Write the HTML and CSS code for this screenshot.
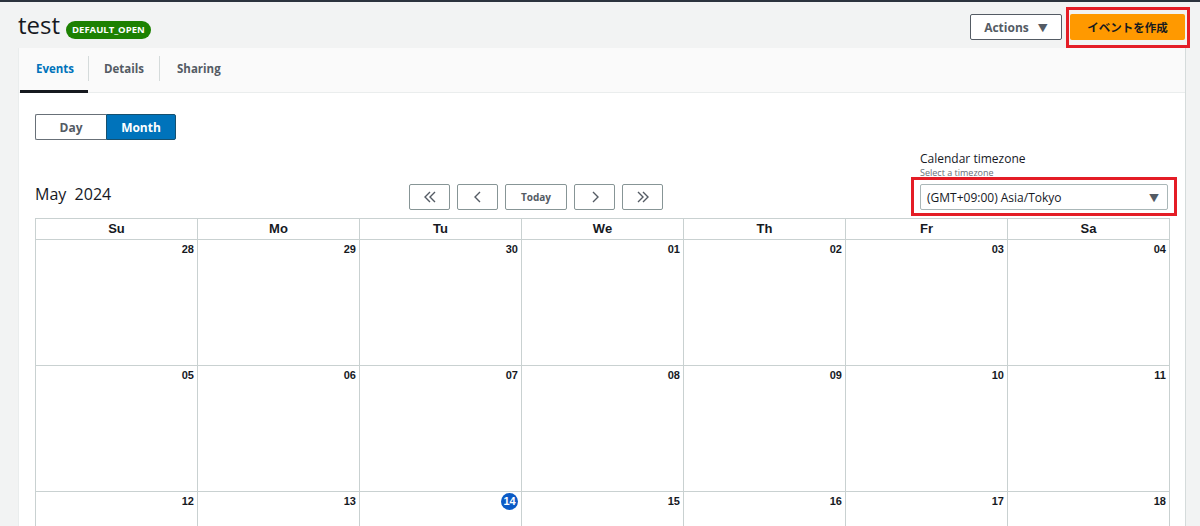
FILE: index.html
```html
<!DOCTYPE html>
<html lang="ja">
<head>
<meta charset="utf-8">
<link rel="stylesheet" href="styles.css">
</head>
<body>
<div class="topline"></div>
<header class="header">
  <div class="title-wrap">
    <h1 class="title">test</h1>
    <span class="badge">DEFAULT_OPEN</span>
  </div>
  <div class="actions">
    <button class="btn-actions">Actions <span class="caret">&#9660;</span></button>
    <div class="highlight hl-primary"><button class="btn-primary">イベントを作成</button></div>
  </div>
</header>
<main class="panel">
  <nav class="tabs">
    <div class="tab active">Events</div>
    <div class="sep"></div>
    <div class="tab">Details</div>
    <div class="sep"></div>
    <div class="tab">Sharing</div>
  </nav>
  <section class="content">
    <div class="seg">
      <button class="seg-btn">Day</button>
      <button class="seg-btn on">Month</button>
    </div>
    <div class="toolbar">
      <div class="month">May&nbsp; 2024</div>
      <div class="nav">
        <button class="nbtn"><svg width="14" height="12" viewBox="0 0 14 12"><path d="M7 1 2 6l5 5M12 1 7 6l5 5" fill="none" stroke="#545b64" stroke-width="1.4"/></svg></button>
        <button class="nbtn"><svg width="10" height="12" viewBox="0 0 10 12"><path d="M7 1 2 6l5 5" fill="none" stroke="#545b64" stroke-width="1.4"/></svg></button>
        <button class="nbtn today">Today</button>
        <button class="nbtn"><svg width="10" height="12" viewBox="0 0 10 12"><path d="M3 1l5 5-5 5" fill="none" stroke="#545b64" stroke-width="1.4"/></svg></button>
        <button class="nbtn"><svg width="14" height="12" viewBox="0 0 14 12"><path d="M2 1l5 5-5 5M7 1l5 5-5 5" fill="none" stroke="#545b64" stroke-width="1.4"/></svg></button>
      </div>
      <div class="tz">
        <div class="tz-label">Calendar timezone</div>
        <div class="tz-desc">Select a timezone</div>
        <div class="highlight hl-tz">
          <div class="tz-select"><span>(GMT+09:00) Asia/Tokyo</span><span class="caret">&#9660;</span></div>
        </div>
      </div>
    </div>
    <div class="cal">
      <div class="dow">Su</div><div class="dow">Mo</div><div class="dow">Tu</div><div class="dow">We</div><div class="dow">Th</div><div class="dow">Fr</div><div class="dow">Sa</div>
      <div class="day"><span class="num">28</span></div>
      <div class="day"><span class="num">29</span></div>
      <div class="day"><span class="num">30</span></div>
      <div class="day"><span class="num">01</span></div>
      <div class="day"><span class="num">02</span></div>
      <div class="day"><span class="num">03</span></div>
      <div class="day"><span class="num">04</span></div>
      <div class="day"><span class="num">05</span></div>
      <div class="day"><span class="num">06</span></div>
      <div class="day"><span class="num">07</span></div>
      <div class="day"><span class="num">08</span></div>
      <div class="day"><span class="num">09</span></div>
      <div class="day"><span class="num">10</span></div>
      <div class="day"><span class="num">11</span></div>
      <div class="day"><span class="num">12</span></div>
      <div class="day"><span class="num">13</span></div>
      <div class="day"><span class="num current">14</span></div>
      <div class="day"><span class="num">15</span></div>
      <div class="day"><span class="num">16</span></div>
      <div class="day"><span class="num">17</span></div>
      <div class="day"><span class="num">18</span></div>
    </div>
  </section>
</main>
</body>
</html>
```

FILE: styles.css
```css
html, body { margin: 0; padding: 0; }
body {
  background: #f2f3f3;
  font-family: "Open Sans", "Noto Sans", "Noto Sans CJK JP", sans-serif;
  color: #16191f;
  height: 526px;
  overflow: hidden;
}
button { font-family: inherit; cursor: pointer; }
.topline { height: 2px; background: #2b333d; }
.header {
  height: 46px;
  box-sizing: border-box;
  display: flex;
  align-items: flex-start;
  justify-content: space-between;
  padding: 5px 10px 0 18px;
}
.title-wrap { display: flex; align-items: flex-start; gap: 6px; margin-top: 3px; }
.title { margin: 0; font-size: 24px; font-weight: 400; line-height: 30px; color: #16191f; }
.badge {
  background: #1d8102;
  color: #fff;
  font-size: 9.5px;
  font-weight: 700;
  line-height: 18px;
  height: 18px;
  padding: 0 6px;
  border-radius: 9px;
  margin-top: 11px;
}
.actions { display: flex; align-items: flex-start; gap: 4px; }
.btn-actions {
  height: 26px;
  width: 92px;
  margin-top: 7px;
  background: #fff;
  border: 1px solid #545b64;
  border-radius: 2px;
  color: #545b64;
  font-size: 12px;
  font-weight: 700;
  padding: 0;
}
.btn-actions .caret { font-size: 10px; margin-left: 6px; }
.highlight { border: 3px solid #e41d26; }
.hl-primary { padding: 4px 2px 5px 1px; }
.btn-primary {
  display: block;
  height: 26px;
  width: 115px;
  background: #ff9900;
  border: none;
  border-radius: 2px;
  color: #16191f;
  font-family: "Noto Sans CJK JP", sans-serif;
  font-size: 11.5px;
  font-weight: 700;
  padding: 0;
}
.panel {
  margin-left: 18px;
  width: 1166px;
  background: #fff;
  border-right: 1px solid #d5dbdb;
  border-left: 1px solid #eaeded;
  min-height: 480px;
}
.tabs {
  height: 45px;
  display: flex;
  align-items: center;
  background: #fafafa;
  border-bottom: 1px solid #eaeded;
  box-sizing: border-box;
  padding-left: 1px;
}
.tab {
  height: 45px;
  box-sizing: border-box;
  display: flex;
  align-items: center;
  padding: 0 15px 3px 15px;
  font-size: 11.5px;
  font-weight: 700;
  color: #545b64;
}
.tab.active {
  color: #0073bb;
  border-bottom: 3px solid #16191f;
  padding-bottom: 0;
  padding-left: 16px;
  padding-right: 14px;
}
.tab:last-child { padding-left: 17px; }
.sep { width: 1px; height: 25px; background: #d5dbdb; margin-top: -3px; }
.content { padding: 21px 16px 0 16px; }
.seg { display: flex; }
.seg-btn {
  width: 71px;
  height: 26px;
  border: 1px solid #687078;
  background: #fff;
  color: #545b64;
  font-size: 12px;
  font-weight: 700;
  padding: 0;
}
.seg-btn:first-child { border-radius: 2px 0 0 2px; border-right: none; }
.seg-btn.on { background: #0073bb; color: #fff; border-color: #16506f; border-radius: 0 2px 2px 0; width: 70px; }
.toolbar {
  display: flex;
  align-items: flex-end;
  margin-top: 9px;
  height: 69px;
  padding-right: 1px;
  padding-bottom: 8px;
  box-sizing: border-box;
}
.month { width: 374px; font-size: 16px; line-height: 20px; padding-bottom: 6px; color: #16191f; }
.nav { display: flex; gap: 7px; }
.nbtn {
  width: 41px;
  height: 26px;
  border: 1px solid #879596;
  border-radius: 2px;
  background: #fff;
  padding: 0;
  display: flex;
  align-items: center;
  justify-content: center;
}
.nbtn.today { width: 62px; font-size: 10px; font-weight: 700; color: #545b64; }
.tz { margin-left: auto; width: 248px; }
.tz-label { font-size: 12px; line-height: 16px; color: #16191f; }
.tz-desc { font-size: 9px; line-height: 12px; color: #687078; margin-bottom: 5px; }
.hl-tz { padding: 4px 6px 3px 6px; margin: -7px -9px -6px -9px; }
.tz-select {
  height: 26px;
  box-sizing: border-box;
  border: 1px solid #aab7b8;
  border-radius: 2px;
  display: flex;
  align-items: center;
  justify-content: space-between;
  padding: 0 8px 0 6px;
  font-size: 12px;
  color: #16191f;
}
.tz-select .caret { font-size: 10px; color: #545b64; }
.cal {
  display: grid;
  grid-template-columns: repeat(7, 1fr);
  width: 1134px;
  border-top: 1px solid #c9d1d1;
  border-left: 1px solid #c9d1d1;
  font-family: "Liberation Sans", Arial, sans-serif;
}
.dow {
  height: 20px;
  line-height: 20px;
  text-align: center;
  font-size: 13px;
  font-weight: 700;
  color: #16191f;
  border-right: 1px solid #c9d1d1;
  border-bottom: 1px solid #c9d1d1;
}
.day {
  height: 122px;
  border-right: 1px solid #c9d1d1;
  border-bottom: 1px solid #c9d1d1;
  display: flex;
  justify-content: flex-end;
  align-items: flex-start;
  padding: 3px 3px 0 0;
  box-sizing: content-box;
}
.num { font-size: 11px; font-weight: 700; line-height: 13px; color: #16191f; }
.num.current {
  background: #0b5bc6;
  color: #fff;
  width: 17px;
  height: 17px;
  line-height: 17px;
  border-radius: 50%;
  text-align: center;
  margin-top: -2px;
  margin-right: 0;
}
```
